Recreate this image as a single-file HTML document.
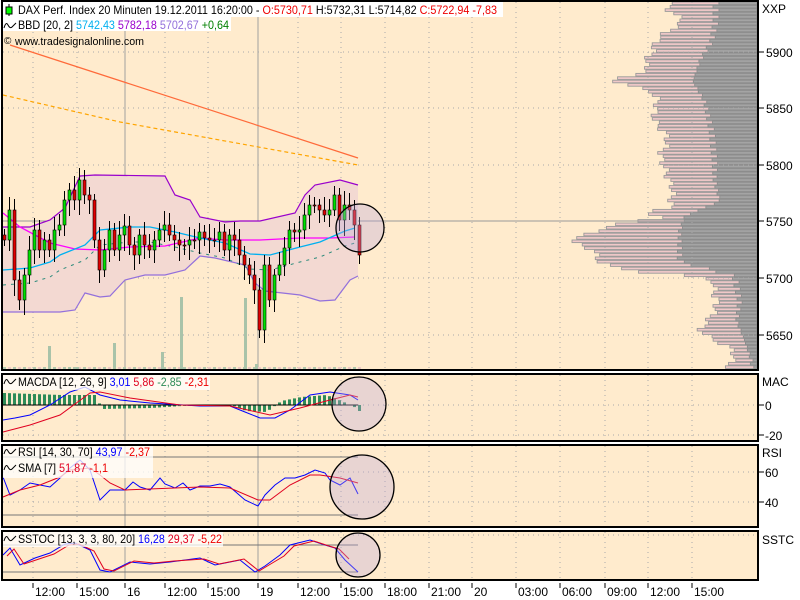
<!DOCTYPE html>
<html><head><meta charset="utf-8"><style>
html,body{margin:0;padding:0;background:#fff;width:800px;height:600px;overflow:hidden}
svg{display:block;font-family:"Liberation Sans",sans-serif;font-size:12px}
</style></head><body>
<svg id="s" width="800" height="600" xmlns="http://www.w3.org/2000/svg">
<rect x="0" y="0" width="800" height="600" fill="#fff"/>
<g id="bg"></g>
<g id="prof"></g>
<g id="grid"></g>
<g id="main"></g>
<g id="ind"></g>
<g id="frames" fill="none" stroke="#000" stroke-width="2">
<rect x="2" y="1" width="756" height="369"/>
<rect x="2" y="374" width="756" height="67"/>
<rect x="2" y="445" width="756" height="82"/>
<rect x="2" y="531" width="756" height="49"/>
</g>
<g id="txt" font-size="12"></g>
</svg>
<script>
const NS="http://www.w3.org/2000/svg";
function el(p,t,a,txt){const e=document.createElementNS(NS,t);for(const k in a)e.setAttribute(k,a[k]);if(txt!==undefined)e.textContent=txt;document.getElementById(p).appendChild(e);return e;}
function pts(a){return a.map(p=>p.join(',')).join(' ');}
function interp(k,x){for(let i=0;i<k.length-1;i++){if(x>=k[i][0]&&x<=k[i+1][0]){const t=(x-k[i][0])/(k[i+1][0]-k[i][0]);return k[i][1]+t*(k[i+1][1]-k[i][1]);}}return x<k[0][0]?k[0][1]:k[k.length-1][1];}
const BG="#ffebcd";
[[3,2,755,368],[3,375,755,66],[3,446,755,81],[3,532,755,48]].forEach(r=>el('bg','rect',{x:r[0],y:r[1],width:r[2],height:r[3],fill:BG}));
// volume profile
const L=[[2,670],[10,665],[20,680],[30,672],[40,660],[60,640],[70,650],[78,617],[82,625],[90,650],[110,655],[130,665],[150,660],[165,670],[180,665],[195,672],[205,678],[212,650],[216,660],[222,620],[226,600],[240,570],[244,590],[255,602],[262,595],[270,630],[275,690],[280,715],[290,720],[300,718],[312,708],[322,705],[330,705],[340,720],[350,730],[360,728],[368,730]];
const G=[[2,716],[20,716],[40,712],[60,700],[80,693],[100,705],[130,712],[160,715],[180,715],[200,720],[215,685],[230,680],[260,680],[275,735],[300,740],[320,737],[340,745],[360,752],[368,752]];
for(let y=2;y<367;y+=3.4){const n=Math.sin(y*1.7)*5+Math.sin(y*0.53)*4;const l=interp(L,y)+n;const g=Math.max(interp(G,y)+Math.sin(y*0.9)*3,l);
el('prof','rect',{x:l,y:y,width:757-l,height:2.6,fill:'#f0c8c8',stroke:'#999','stroke-width':0.9});
el('prof','rect',{x:g,y:y,width:757-g,height:2.6,fill:'#a4a4a4',stroke:'#8c8c8c','stroke-width':0.9});}
// grid
const vx=[33,77,165,208,298,341,385,429,472,516,560,605,648,692];
vx.forEach(x=>{[[2,370],[375,441],[446,527],[532,580]].forEach(r=>el('grid','line',{x1:x,y1:r[0],x2:x,y2:r[1],stroke:'#aaa','stroke-dasharray':'1,4'}));});
[125,258].forEach(x=>{[[2,370],[375,441],[446,527],[532,580]].forEach(r=>el('grid','line',{x1:x,y1:r[0],x2:x,y2:r[1],stroke:'#a0a0a0'}));});
[52,108,165,278,335].forEach(y=>el('grid','line',{x1:3,y1:y,x2:757,y2:y,stroke:'#aaa','stroke-dasharray':'1,4'}));
el('grid','line',{x1:3,y1:221,x2:757,y2:221,stroke:'#999'});
[405,435,472,502,535].forEach(y=>el('grid','line',{x1:3,y1:y,x2:757,y2:y,stroke:'#aaa','stroke-dasharray':'1,4'}));
const up=[[3,227],[30,227],[50,220],[65,208],[80,176],[95,175],[165,176],[175,195],[190,200],[200,217],[225,222],[240,221],[260,221],[295,213],[305,195],[315,185],[340,180],[358,185]];
const lo=[[3,312],[60,312],[75,310],[85,293],[100,297],[110,296],[125,280],[145,275],[165,275],[185,270],[200,256],[215,258],[245,265],[255,283],[265,291],[300,295],[320,301],[335,300],[350,280],[358,276]];
el('main','polygon',{points:pts(up.concat(lo.slice().reverse())),fill:'#f3d9d2'});
for(let x=3;x<=358;x+=5){el('main','rect',{x:x,y:367,width:3,height:3,fill:(x%10==3?'#adc6ad':'#ecc6c6')});}
[[49,24],[114,27],[162,18],[181,73],[245,72],[256,6],[69,3],[77,3]].forEach(v=>el('main','rect',{x:v[0]-1,y:370-v[1],width:3,height:v[1],fill:'#a9c3a9'}));
el('main','polyline',{points:pts(up),fill:'none',stroke:'#9900cc','stroke-width':1.2});
el('main','polyline',{points:pts(lo),fill:'none',stroke:'#9370db','stroke-width':1.2});
el('main','polyline',{points:'10,45 358,158',fill:'none',stroke:'#ff6a3a','stroke-width':1.2});
el('main','polyline',{points:'3,95 120,122 358,165',fill:'none',stroke:'#ffa500','stroke-width':1.2,'stroke-dasharray':'4,3'});
const mg=[[3,213],[20,227],[35,235],[50,243],[75,249],[100,250],[130,247],[165,246],[200,238],[225,240],[260,240],[300,238],[330,238],[355,237]];
const cy=[[3,270],[30,268],[50,262],[60,255],[85,245],[100,230],[130,227],[150,227],[175,232],[200,238],[225,243],[250,254],[270,255],[300,247],[320,242],[345,231],[355,228]];
el('main','polyline',{points:pts(cy.map(p=>[p[0],p[1]+15])),fill:'none',stroke:'#2a8a7a','stroke-dasharray':'3,5'});
el('main','polyline',{points:pts(mg),fill:'none',stroke:'#ff00ff','stroke-width':1.3});
el('main','polyline',{points:pts(cy),fill:'none',stroke:'#00b0f0','stroke-width':1.3});
const c=[240,210,280,300,275,250,230,250,240,250,230,225,200,190,200,180,195,200,240,270,250,230,250,235,226,245,255,235,245,250,240,230,225,235,240,245,245,240,240,232,238,240,240,232,250,235,240,255,265,275,290,330,265,300,275,265,248,230,232,230,215,205,205,210,215,210,195,220,205,210,225,255];
let prev=235;
c.forEach((cl,i)=>{const x=3+i*5;const o=prev;const t=Math.min(o,cl),b=Math.max(o,cl);const hi=t-6-(i*7%9),lw=b+6+(i*5%11);
el('main','line',{x1:x+1.5,y1:hi,x2:x+1.5,y2:lw,stroke:'#000'});
el('main','rect',{x:x,y:t,width:3,height:Math.max(b-t,1),fill:cl<o?'#00e000':'#e00000',stroke:'#000','stroke-width':0.6});prev=cl;});
el('main','circle',{cx:360,cy:228,r:24,fill:'rgba(190,170,220,0.35)',stroke:'#000','stroke-width':1.3});
for(let x=3;x<=358;x+=5){let h=interp([[3,-12],[60,-10],[95,-10],[100,4],[150,3],[180,1],[230,0],[245,6],[265,7],[280,-4],[300,-8],[325,-10],[340,-4],[355,3],[358,6]],x);el('ind','rect',{x:x,y:h<0?405+h:405,width:3,height:Math.abs(h),fill:'#2e8b57'});}
el('ind','line',{x1:3,y1:405,x2:358,y2:405,stroke:'#000'});
el('ind','polyline',{points:pts([[3,420],[15,418],[30,415],[50,405],[70,392],[85,387],[100,395],[120,400],[150,403],[200,406],[230,406],[245,412],[260,418],[275,418],[290,410],[310,395],[330,392],[350,395],[358,400]]),fill:'none',stroke:'#0000ff'});
el('ind','polyline',{points:pts([[3,432],[30,425],[60,415],[90,393],[100,392],[130,398],[180,405],[230,406],[270,415],[300,408],[330,400],[350,395],[358,397]]),fill:'none',stroke:'#e00020'});
el('ind','circle',{cx:359,cy:404,r:27,fill:'rgba(190,170,220,0.35)',stroke:'#000','stroke-width':1.3});
el('ind','line',{x1:3,y1:457,x2:358,y2:457,stroke:'#777'});el('ind','line',{x1:3,y1:515,x2:358,y2:515,stroke:'#777'});
el('ind','polyline',{points:pts([[3,477],[10,495],[20,490],[30,483],[40,485],[50,487],[60,478],[70,468],[80,460],[90,470],[100,500],[110,490],[125,490],[133,482],[140,487],[150,490],[160,478],[165,484],[175,488],[183,483],[190,490],[200,486],[210,486],[220,484],[230,487],[245,500],[258,506],[265,495],[275,485],[285,478],[295,478],[305,475],[315,470],[325,473],[330,480],[340,485],[350,478],[358,494]]),fill:'none',stroke:'#0000ff'});
el('ind','polyline',{points:pts([[3,497],[20,490],[40,485],[60,477],[70,470],[90,468],[100,475],[110,483],[125,490],[200,487],[230,488],[258,500],[270,500],[290,485],[310,475],[320,475],[340,478],[358,483]]),fill:'none',stroke:'#e00020'});
el('ind','circle',{cx:362,cy:487,r:32,fill:'rgba(190,170,220,0.35)',stroke:'#000','stroke-width':1.3});
el('ind','line',{x1:3,y1:545,x2:358,y2:545,stroke:'#777'});el('ind','line',{x1:3,y1:572,x2:358,y2:572,stroke:'#777'});
const sb=[[3,555],[10,548],[20,565],[35,558],[50,553],[65,544],[75,543],[90,550],[100,570],[110,572],[130,562],[150,564],[170,562],[200,558],[215,565],[240,560],[255,572],[265,566],[280,555],[290,545],[310,540],[325,545],[335,548],[345,560],[358,572]];
el('ind','polyline',{points:pts(sb),fill:'none',stroke:'#0000ff'});
el('ind','polyline',{points:pts(sb.map(p=>[p[0]+4,p[1]+(p[1]>558?-1:1)]).filter(p=>p[0]<=358)),fill:'none',stroke:'#e00020'});
el('ind','circle',{cx:358,cy:555,r:22,fill:'rgba(190,170,220,0.35)',stroke:'#000','stroke-width':1.3});
const T=(x,y,s,f,extra)=>el('txt','text',Object.assign({x:x,y:y,fill:f||'#000'},extra||{}),s);
const fit=(e,len)=>{e.setAttribute('textLength',len);e.setAttribute('lengthAdjust','spacingAndGlyphs');};
el('txt','rect',{x:3,y:2,width:500,height:15,fill:'#fff'});
el('txt','rect',{x:3,y:17,width:228,height:14,fill:'#fff'});
el('txt','line',{x1:9,y1:4,x2:9,y2:16,stroke:'#000'});el('txt','rect',{x:6,y:7,width:6,height:7,fill:'#0f0',stroke:'#000'});
const t1=T(18,14,'');t1.innerHTML='DAX Perf. Index 20 Minuten 19.12.2011 16:20:00 - <tspan fill="#e00">O:5730,71</tspan> H:5732,31 L:5714,82 <tspan fill="#e00">C:5722,94 -7,83</tspan>';fit(t1,479);
const wave=(x,y)=>el('txt','path',{d:`M${x},${y+3} q2,-7 4,-3 t4,2 t4,-4`,fill:'none',stroke:'#000'});
wave(4,25);const t2=T(18,29,'');t2.innerHTML='BBD [20, 2] <tspan fill="#00b0f0">5742,43</tspan> <tspan fill="#9900cc">5782,18</tspan> <tspan fill="#9370db">5702,67</tspan> <tspan fill="#008000">+0,64</tspan>';fit(t2,211);
T(4,44,'©',null,{'font-size':10});const tw=T(15,45,'www.tradesignalonline.com',null,{'font-size':11});fit(tw,129);
el('txt','rect',{x:3,y:375,width:207,height:15,fill:'rgba(255,255,255,0.75)'});
wave(4,381);const t3=T(18,386,'');t3.innerHTML='MACDA [12, 26, 9] <tspan fill="#0000ff">3,01</tspan> <tspan fill="#e00020">5,86</tspan> <tspan fill="#2e8b57">-2,85</tspan> <tspan fill="#e00">-2,31</tspan>';fit(t3,191);
el('txt','rect',{x:3,y:446,width:150,height:32,fill:'rgba(255,255,255,0.75)'});
wave(4,451);const t4=T(18,456,'');t4.innerHTML='RSI [14, 30, 70] <tspan fill="#0000ff">43,97</tspan> <tspan fill="#e00">-2,37</tspan>';fit(t4,132);
wave(4,467);const t5=T(18,472,'');t5.innerHTML='SMA [7] <tspan fill="#e00020">51,87</tspan> <tspan fill="#e00">-1,1</tspan>';fit(t5,90);
el('txt','rect',{x:3,y:532,width:220,height:15,fill:'rgba(255,255,255,0.75)'});
wave(4,538);const t6=T(18,543,'');t6.innerHTML='SSTOC [13, 3, 3, 80, 20] <tspan fill="#0000ff">16,28</tspan> <tspan fill="#e00020">29,37</tspan> <tspan fill="#e00">-5,22</tspan>';fit(t6,204);
T(762,13,'XXP');
[[52,'5900'],[108,'5850'],[165,'5800'],[221,'5750'],[278,'5700'],[335,'5650']].forEach(a=>{el('txt','line',{x1:759,y1:a[0],x2:764,y2:a[0],stroke:'#000'});T(766,a[0]+5,a[1]);});
T(762,386,'MAC');
[[405,'0'],[435,'-20'],[472,'60'],[502,'40']].forEach(a=>{el('txt','line',{x1:759,y1:a[0],x2:764,y2:a[0],stroke:'#000'});T(765,a[0]+5,a[1]);});
T(762,457,'RSI');T(762,544,'SSTC');
[[33,'12:00'],[77,'15:00'],[125,'16'],[165,'12:00'],[208,'15:00'],[258,'19'],[298,'12:00'],[341,'15:00'],[385,'18:00'],[429,'21:00'],[472,'20'],[516,'03:00'],[560,'06:00'],[605,'09:00'],[648,'12:00'],[692,'15:00']].forEach(a=>{el('txt','line',{x1:a[0],y1:583,x2:a[0],y2:588,stroke:'#000'});T(a[0]+2,596,a[1]);});
</script>
</body></html>
